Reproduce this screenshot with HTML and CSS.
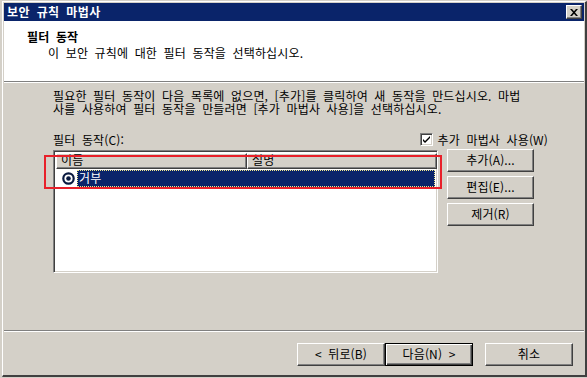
FILE: index.html
```html
<!DOCTYPE html>
<html lang="ko">
<head>
	<meta charset="UTF-8">
	<title>보안 규칙 마법사</title>
	<link rel="stylesheet" href="styles.css">
</head>
<body>
	<div class="window">
		<div class="titlebar">
			<span class="title">보안 규칙 마법사</span>
			<span class="close">
				<svg width="8" height="7" viewBox="0 0 8 7"><path d="M0 0h2l2 2.2L6 0h2L5 3.5 8 7H6L4 4.8 2 7H0l3-3.5z" fill="#000"/></svg>
			</span>
		</div>
		<div class="header">
			<div class="h-title">필터 동작</div>
			<div class="h-sub">이 보안 규칙에 대한 필터 동작을 선택하십시오.</div>
		</div>
		<div class="content">
			<p class="intro">필요한 필터 동작이 다음 목록에 없으면, [추가]를 클릭하여 새 동작을 만드십시오. 마법<br>사를 사용하여 필터 동작을 만들려면 [추가 마법사 사용]을 선택하십시오.</p>
			<div class="label-row">
				<span>필터 동작(C):</span>
				<span class="check">
					<span class="box">
						<svg width="9" height="9" viewBox="0 0 9 9"><path d="M1 4l2 2 5-5v2L3 8 1 6z" fill="#000"/></svg>
					</span>
					추가 마법사 사용(W)
				</span>
			</div>
			<div class="list-row">
				<div class="list">
					<div class="list-head">
						<div class="col col-name">이름</div>
						<div class="col col-desc">설명</div>
					</div>
					<div class="list-item">
						<svg class="radio" width="13" height="13" viewBox="0 0 13 13"><circle cx="6.5" cy="6.5" r="5.2" fill="#fff" stroke="#0a1a40" stroke-width="2.2"/><circle cx="6.5" cy="6.5" r="2.3" fill="#0a1a40"/></svg>
						<span class="sel">거부</span>
					</div>
				</div>
				<div class="side">
					<div class="btn">추가(A)...</div>
					<div class="btn">편집(E)...</div>
					<div class="btn">제거(R)</div>
				</div>
				<div class="mark"></div>
			</div>
		</div>
		<div class="footer">
			<div class="btn wide">&lt; 뒤로(B)</div>
			<div class="btn wide default">다음(N) &gt;</div>
			<div class="btn wide cancel">취소</div>
		</div>
	</div>
</body>
</html>
```

FILE: styles.css
```css
*{
	margin: 0px;
	padding: 0px;
	box-sizing: border-box;
}
body{
	width: 587px;
	height: 378px;
	overflow: hidden;
	background: #d4d0c8;
	padding-top: 1px;
	font-family: "Noto Sans CJK KR", "Liberation Sans", sans-serif;
	font-size: 12px;
	letter-spacing: 0.15px;
	word-spacing: 3px;
	color: #000;
}
.window{
	margin-left: 2px;
	width: 585px;
	height: 376px;
	border-top: 1px solid #fff;
	border-left: 1px solid #fff;
	border-right: 2px solid #404040;
	border-bottom: 2px solid #404040;
	padding: 1px 1px 0 1px;
	background: #d4d0c8;
}
.titlebar{
	height: 18px;
	background: #0a246a;
	display: flex;
	align-items: center;
	justify-content: space-between;
	padding: 0 2px 0 3px;
}
.title{
	color: #fff;
	font-weight: bold;
	font-size: 12px;
	line-height: 18px;
	letter-spacing: 0.4px;
}
.close{
	width: 16px;
	height: 14px;
	background: #d4d0c8;
	border-top: 1px solid #fff;
	border-left: 1px solid #fff;
	border-right: 1px solid #404040;
	border-bottom: 1px solid #404040;
	box-shadow: inset -1px -1px 0 #808080;
	display: flex;
	align-items: center;
	justify-content: center;
}
.header{
	height: 61px;
	background: #fff;
	border-bottom: 1px solid #808080;
	box-shadow: 0 1px 0 #fff;
	padding: 8px 0 0 23px;
	line-height: 16px;
}
.h-title{
	font-weight: bold;
}
.h-sub{
	padding-left: 21px;
}
.content{
	height: 249px;
	padding: 7px 0 0 49px;
	border-bottom: 1px solid #808080;
}
.intro{
	line-height: 13px;
	white-space: nowrap;
}
.label-row{
	display: flex;
	justify-content: space-between;
	align-items: center;
	width: 495px;
	margin-top: 16px;
	height: 16px;
}
.check{
	display: flex;
	align-items: center;
	gap: 5px;
}
.box{
	width: 13px;
	height: 13px;
	background: #fff;
	border-top: 1px solid #808080;
	border-left: 1px solid #808080;
	border-right: 1px solid #fff;
	border-bottom: 1px solid #fff;
	box-shadow: inset 1px 1px 0 #404040, inset -1px -1px 0 #d4d0c8;
	display: flex;
	align-items: center;
	justify-content: center;
}
.list-row{
	position: relative;
	display: flex;
	gap: 9px;
	margin-top: 3px;
}
.list{
	width: 385px;
	height: 123px;
	background: #fff;
	border-top: 1px solid #808080;
	border-left: 1px solid #808080;
	border-right: 1px solid #fff;
	border-bottom: 1px solid #fff;
	box-shadow: inset 1px 1px 0 #404040, inset -1px -1px 0 #d4d0c8;
	padding: 2px;
}
.list-head{
	display: flex;
	height: 16px;
	width: 381px;
}
.col{
	background: #d4d0c8;
	border-top: 1px solid #fff;
	border-left: 1px solid #fff;
	border-right: 1px solid #404040;
	border-bottom: 1px solid #404040;
	box-shadow: inset -1px -1px 0 #808080;
	line-height: 11px;
	padding-left: 4px;
	overflow: hidden;
}
.col-name{
	width: 191px;
}
.col-desc{
	width: 190px;
}
.list-item{
	display: flex;
	align-items: center;
	height: 18px;
	padding-left: 6px;
}
.radio{
	margin-right: 2px;
}
.sel{
	flex: 1;
	height: 17px;
	background: #0a246a;
	color: #fff;
	border: 1px dotted #f0e890;
	line-height: 14px;
	padding-left: 1px;
}
.side{
	display: flex;
	flex-direction: column;
	gap: 4px;
	margin-top: -1px;
}
.btn{
	width: 87px;
	height: 23px;
	background: #d4d0c8;
	border-top: 1px solid #fff;
	border-left: 1px solid #fff;
	border-right: 1px solid #404040;
	border-bottom: 1px solid #404040;
	box-shadow: inset -1px -1px 0 #808080;
	text-align: center;
	line-height: 20px;
}
.mark{
	position: absolute;
	left: -9px;
	top: 5px;
	width: 398px;
	height: 34px;
	border: 2px solid #e8202a;
}
.footer{
	border-top: 1px solid #fff;
	display: flex;
	justify-content: flex-end;
	padding: 11px 11px 0 0;
}
.wide{
	width: 88px;
}
.default{
	border: 1px solid #000;
	box-shadow: inset 1px 1px 0 #fff, inset -1px -1px 0 #404040, inset -2px -2px 0 #808080;
}
.cancel{
	margin-left: 12px;
}
```
